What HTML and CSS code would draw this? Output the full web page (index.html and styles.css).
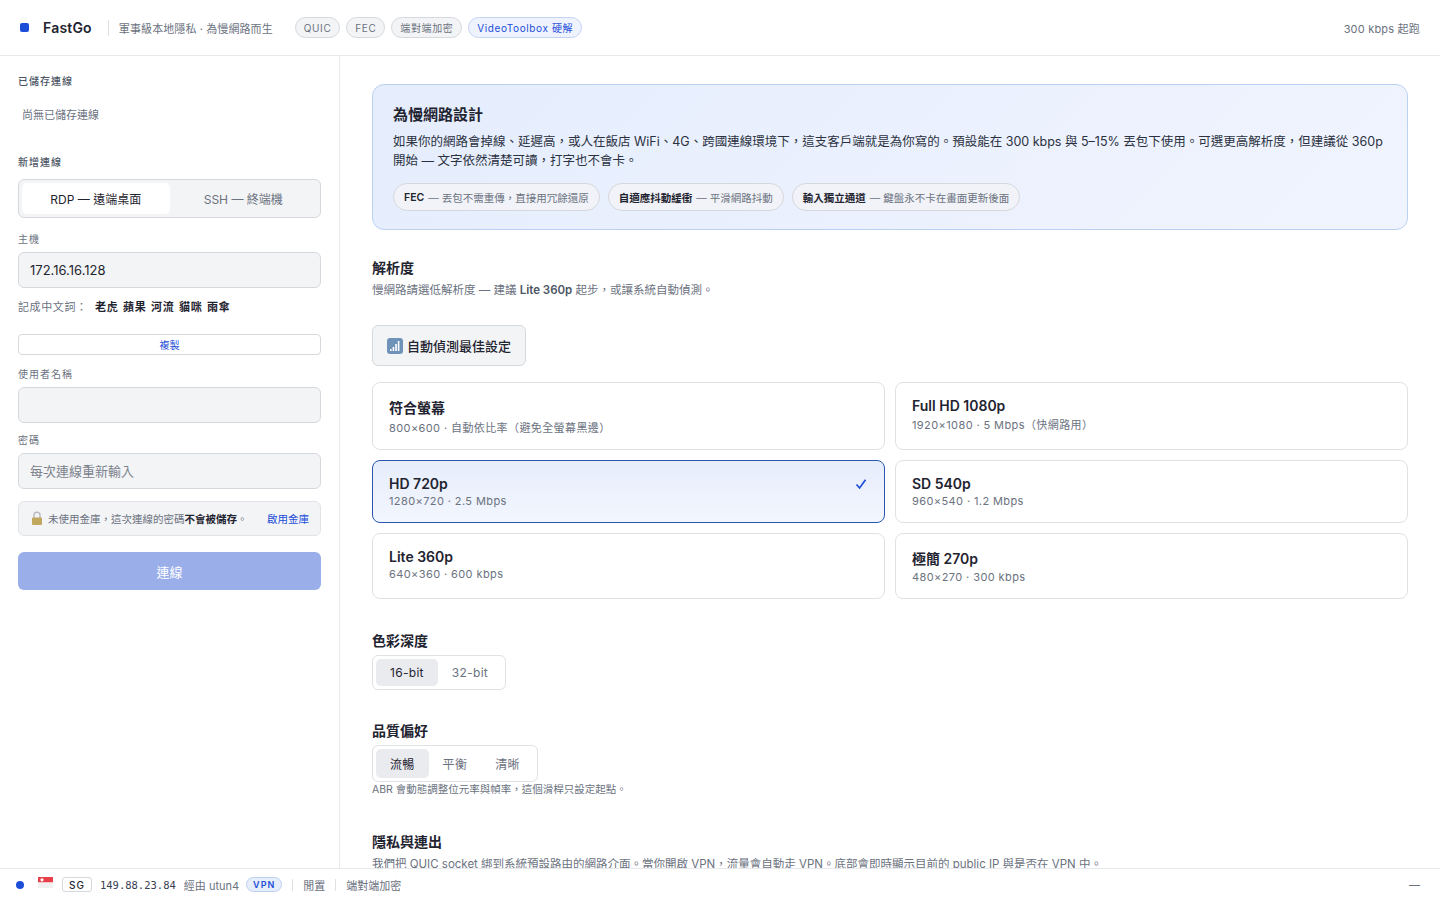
FILE: index.html
```html
<!DOCTYPE html>
<html lang="zh-Hant">
<head>
    <meta charset="UTF-8">
    <meta name="viewport" content="width=device-width, initial-scale=1.0">
    <title>FastGo</title>
    <link rel="stylesheet" href="styles.css">
</head>
<body>
    <div class="app">
        <header class="topbar">
            <span class="brand-dot"></span>
            <span class="brand">FastGo</span>
            <span class="tagline">軍事級本地隱私 · 為慢網路而生</span>
            <div class="tags">
                <span class="tag">QUIC</span>
                <span class="tag">FEC</span>
                <span class="tag">端對端加密</span>
                <span class="tag tag-blue">VideoToolbox 硬解</span>
            </div>
            <span class="topbar-right">300 kbps 起跑</span>
        </header>

        <div class="body">
            <aside class="sidebar">
                <div class="side-title">已儲存連線</div>
                <div class="empty">尚無已儲存連線</div>
                <div class="side-title side-title-new">新增連線</div>

                <div class="proto">
                    <button class="proto-btn active">RDP — 遠端桌面</button>
                    <button class="proto-btn">SSH — 終端機</button>
                </div>

                <label class="field-label label-host">主機</label>
                <input class="input" type="text" value="172.16.16.128">

                <div class="words">
                    <span class="words-label">記成中文詞：</span>
                    <span class="words-list">老虎 蘋果 河流 貓咪 雨傘</span>
                </div>
                <button class="copy-btn">複製</button>

                <label class="field-label label-user">使用者名稱</label>
                <input class="input" type="text">

                <label class="field-label label-pass">密碼</label>
                <input class="input" type="password" placeholder="每次連線重新輸入">

                <div class="vault">
                    <svg class="lock" width="12" height="15" viewBox="0 0 12 15">
                        <path d="M3 7V4.2a3 3 0 0 1 6 0V7" fill="none" stroke="#b9bcc0" stroke-width="1.5"/>
                        <rect x="1" y="6.5" width="10" height="7.5" rx="1" fill="#c2a75e"/>
                    </svg>
                    <span class="vault-text">未使用金庫，這次連線的密碼<strong>不會被儲存</strong>。</span>
                    <a class="vault-link">啟用金庫</a>
                </div>

                <button class="connect">連線</button>
            </aside>

            <main class="main">
                <section class="banner">
                    <h2>為慢網路設計</h2>
                    <p>如果你的網路會掉線、延遲高，或人在飯店 WiFi、4G、跨國連線環境下，這支客戶端就是為你寫的。預設能在 300 kbps 與 5–15% 丟包下使用。可選更高解析度，但建議從 360p 開始 — 文字依然清楚可讀，打字也不會卡。</p>
                    <div class="pills">
                        <span class="pill"><b>FEC</b> — 丟包不需重傳，直接用冗餘還原</span>
                        <span class="pill"><b>自適應抖動緩衝</b> — 平滑網路抖動</span>
                        <span class="pill"><b>輸入獨立通道</b> — 鍵盤永不卡在畫面更新後面</span>
                    </div>
                </section>

                <section class="sec-res">
                    <h3>解析度</h3>
                    <p class="hint">慢網路請選低解析度 — 建議 <b>Lite 360p</b> 起步，或讓系統自動偵測。</p>
                    <button class="detect">
                        <svg width="16" height="16" viewBox="0 0 16 16">
                            <rect width="16" height="16" rx="3" fill="#6f93b8"/>
                            <rect x="3" y="11" width="1.6" height="2" fill="#fff"/>
                            <rect x="5.6" y="9" width="1.6" height="4" fill="#fff"/>
                            <rect x="8.2" y="6" width="1.6" height="7" fill="#fff"/>
                            <rect x="10.8" y="3" width="1.6" height="10" fill="#fff"/>
                        </svg>
                        自動偵測最佳設定
                    </button>
                    <div class="res-grid">
                        <div class="res-card">
                            <div class="res-name">符合螢幕</div>
                            <div class="res-sub">800×600 · 自動依比率（避免全螢幕黑邊）</div>
                        </div>
                        <div class="res-card">
                            <div class="res-name">Full HD 1080p</div>
                            <div class="res-sub">1920×1080 · 5 Mbps（快網路用）</div>
                        </div>
                        <div class="res-card selected">
                            <div class="res-name">HD 720p</div>
                            <div class="res-sub">1280×720 · 2.5 Mbps</div>
                            <svg class="check" width="12" height="12" viewBox="0 0 12 12">
                                <path d="M1.5 6.5 4.6 10 10.5 1.8" fill="none" stroke="#1d4ed8" stroke-width="1.7"/>
                            </svg>
                        </div>
                        <div class="res-card">
                            <div class="res-name">SD 540p</div>
                            <div class="res-sub">960×540 · 1.2 Mbps</div>
                        </div>
                        <div class="res-card">
                            <div class="res-name">Lite 360p</div>
                            <div class="res-sub">640×360 · 600 kbps</div>
                        </div>
                        <div class="res-card">
                            <div class="res-name">極簡 270p</div>
                            <div class="res-sub">480×270 · 300 kbps</div>
                        </div>
                    </div>
                </section>

                <section class="sec-color">
                    <h3>色彩深度</h3>
                    <div class="seg">
                        <button class="seg-btn active">16-bit</button>
                        <button class="seg-btn">32-bit</button>
                    </div>
                </section>

                <section class="sec-quality">
                    <h3>品質偏好</h3>
                    <div class="seg seg-tall">
                        <button class="seg-btn active">流暢</button>
                        <button class="seg-btn">平衡</button>
                        <button class="seg-btn">清晰</button>
                    </div>
                    <p class="note">ABR 會動態調整位元率與幀率，這個滑桿只設定起點。</p>
                </section>

                <section class="sec-privacy">
                    <h3>隱私與連出</h3>
                    <p class="hint">我們把 QUIC socket 綁到系統預設路由的網路介面。當你開啟 VPN，流量會自動走 VPN。底部會即時顯示目前的 public IP 與是否在 VPN 中。</p>
                </section>
            </main>
        </div>

        <footer class="statusbar">
            <span class="status-dot"></span>
            <svg class="flag" width="15" height="11" viewBox="0 0 15 11">
                <rect width="15" height="5.5" fill="#e8404a"/>
                <rect y="5.5" width="15" height="5.5" fill="#f1f1f1"/>
                <circle cx="4" cy="2.8" r="1.6" fill="#fff"/>
            </svg>
            <span class="cc">SG</span>
            <span class="ip">149.88.23.84</span>
            <span class="via">經由 utun4</span>
            <span class="vpn">VPN</span>
            <span class="sep"></span>
            <span class="status-text">閒置</span>
            <span class="sep"></span>
            <span class="status-text">端對端加密</span>
            <span class="status-right">—</span>
        </footer>
    </div>
</body>
</html>
```

FILE: styles.css
```css
* {
    box-sizing: border-box;
}

body {
    margin: 0;
    font-family: Inter, "Noto Sans CJK TC", sans-serif;
    color: #1f2430;
    background: #fff;
}

h2, h3, p {
    margin: 0;
}

button {
    font-family: inherit;
    cursor: pointer;
}

.app {
    height: 100vh;
    display: flex;
    flex-direction: column;
    overflow: hidden;
}

/* top bar */
.topbar {
    height: 56px;
    flex: none;
    display: flex;
    align-items: center;
    padding: 0 20px;
    border-bottom: 1px solid #e8e9ec;
}

.brand-dot {
    width: 9px;
    height: 9px;
    border-radius: 2px;
    background: #1d4ed8;
    margin-right: 14px;
}

.brand {
    font-size: 14px;
    font-weight: 600;
    letter-spacing: 0.2px;
    padding-right: 16px;
    margin-right: 10px;
    border-right: 1px solid #dfe1e5;
    height: 16px;
    line-height: 16px;
}

.tagline {
    font-size: 11px;
    color: #6b7280;
    letter-spacing: 0.1px;
}

.tags {
    display: flex;
    gap: 6px;
    margin-left: 22px;
}

.tag {
    height: 21px;
    display: flex;
    align-items: center;
    padding: 0 8px;
    font-size: 10px;
    letter-spacing: 0.6px;
    color: #6b7280;
    background: #f3f4f6;
    border: 1px solid #d5d8dd;
    border-radius: 11px;
}

.tag-blue {
    color: #1d4ed8;
    background: #eef3fe;
    border-color: #c5d3f3;
}

.topbar-right {
    margin-left: auto;
    font-size: 11px;
    color: #6b7280;
    letter-spacing: 0.2px;
}

.body {
    flex: 1;
    display: flex;
    min-height: 0;
}

/* sidebar */
.sidebar {
    width: 340px;
    flex: none;
    padding: 18px 18px 0;
    border-right: 1px solid #e8e9ec;
}

.side-title {
    font-size: 10px;
    line-height: 15px;
    font-weight: 500;
    letter-spacing: 1px;
    color: #4b5563;
}

.empty {
    margin-top: 18px;
    padding-left: 4px;
    font-size: 11px;
    line-height: 16px;
    color: #6b7280;
}

.side-title-new {
    margin-top: 32px;
}

.proto {
    margin-top: 9px;
    height: 39px;
    display: flex;
    padding: 3px;
    background: #f3f4f6;
    border: 1px solid #d5d8dd;
    border-radius: 6px;
}

.proto-btn {
    flex: 1;
    border: none;
    background: none;
    border-radius: 5px;
    font-size: 12px;
    color: #6b7280;
}

.proto-btn.active {
    background: #fff;
    color: #1f2430;
}

.field-label {
    display: block;
    font-size: 10px;
    line-height: 15px;
    letter-spacing: 1px;
    color: #6b7280;
}

.label-host {
    margin-top: 14px;
}

.label-user {
    margin-top: 12px;
}

.label-pass {
    margin-top: 10px;
}

.input {
    display: block;
    width: 100%;
    height: 36px;
    margin-top: 5px;
    padding: 0 11px;
    font-family: inherit;
    font-size: 13px;
    color: #1f2430;
    background: #f3f4f6;
    border: 1px solid #d5d8dd;
    border-radius: 6px;
    outline: none;
}

.input::placeholder {
    color: #7b818b;
}

.words {
    margin-top: 9px;
    height: 18px;
    display: flex;
    align-items: center;
    font-size: 11px;
}

.words-label {
    color: #6b7280;
    letter-spacing: 0.6px;
    width: 77px;
}

.words-list {
    font-weight: 700;
    letter-spacing: 0.8px;
    word-spacing: 1px;
}

.copy-btn {
    display: block;
    width: 100%;
    height: 21px;
    margin-top: 19px;
    padding: 0;
    font-size: 10px;
    color: #1d4ed8;
    background: #fff;
    border: 1px solid #d5d8dd;
    border-radius: 4px;
}

.vault {
    margin-top: 12px;
    height: 35px;
    display: flex;
    align-items: center;
    padding: 0 11px 0 12px;
    font-size: 10.5px;
    color: #6b7280;
    background: #f3f4f6;
    border: 1px solid #e1e3e7;
    border-radius: 6px;
}

.vault strong {
    color: #1f2430;
}

.lock {
    margin-right: 5px;
    flex: none;
}

.vault-link {
    margin-left: auto;
    color: #1d4ed8;
}

.connect {
    display: block;
    width: 100%;
    height: 38px;
    margin-top: 16px;
    font-size: 13px;
    color: #fff;
    background: #9aaeea;
    border: none;
    border-radius: 6px;
}

/* main column */
.main {
    flex: 1;
    min-width: 0;
    padding: 28px 32px 0;
    overflow: hidden;
}

.banner {
    padding: 19px 20px 18px;
    background: linear-gradient(135deg, #e5edfd, #f0f4fe);
    border: 1px solid #bcd0f2;
    border-radius: 12px;
}

.banner h2 {
    font-size: 15px;
    line-height: 22px;
    font-weight: 600;
}

.banner p {
    margin-top: 6px;
    font-size: 12.5px;
    line-height: 19px;
    color: #2b3140;
}

.pills {
    display: flex;
    gap: 8px;
    margin-top: 13px;
}

.pill {
    height: 28px;
    display: flex;
    align-items: center;
    gap: 4px;
    padding: 0 10px;
    font-size: 10.5px;
    color: #6b7280;
    background: #f1f3f8;
    border: 1px solid #d5d8dd;
    border-radius: 14px;
}

.pill b {
    color: #1f2430;
    font-weight: 600;
}

.main h3 {
    font-size: 14px;
    line-height: 20px;
    font-weight: 600;
}

.hint {
    margin-top: 3px;
    font-size: 11.5px;
    line-height: 18px;
    color: #6b7280;
    white-space: nowrap;
}

.hint b {
    font-weight: 600;
    color: #4b5563;
}

.sec-res {
    margin-top: 28px;
}

.detect {
    display: flex;
    align-items: center;
    gap: 4px;
    height: 41px;
    margin-top: 26px;
    padding: 0 14px;
    font-size: 13px;
    font-weight: 500;
    color: #1f2430;
    background: #f3f4f6;
    border: 1px solid #d5d8dd;
    border-radius: 6px;
}

.res-grid {
    margin-top: 16px;
    display: grid;
    grid-template-columns: 1fr 1fr;
    gap: 10px;
}

.res-card {
    position: relative;
    padding: 14px 16px;
    background: #fff;
    border: 1px solid #dfe1e5;
    border-radius: 8px;
}

.res-card.selected {
    border-color: #2a55b0;
    background: linear-gradient(180deg, #e6edfb, #f3f6fe);
}

.res-name {
    font-size: 14px;
    font-weight: 600;
}

.res-sub {
    margin-top: 2px;
    font-size: 11px;
    letter-spacing: 0.4px;
    color: #6b7280;
}

.check {
    position: absolute;
    top: 17px;
    right: 17px;
}

.sec-color {
    margin-top: 32px;
}

.seg {
    display: inline-flex;
    height: 35px;
    margin-top: 4px;
    padding: 3px;
    background: #fff;
    border: 1px solid #dfe1e5;
    border-radius: 6px;
}

.seg-tall {
    height: 37px;
}

.seg-btn {
    padding: 0 14px;
    border: none;
    background: none;
    border-radius: 5px;
    font-size: 12px;
    letter-spacing: 0.3px;
    color: #6b7280;
}

.seg-btn.active {
    background: #e9ebef;
    color: #1f2430;
}

.sec-quality {
    margin-top: 31px;
}

.note {
    font-size: 10.5px;
    line-height: 16px;
    color: #6b7280;
}

.sec-privacy {
    margin-top: 34px;
}

/* status bar */
.statusbar {
    height: 32px;
    flex: none;
    display: flex;
    align-items: center;
    padding: 0 16px;
    font-size: 11px;
    color: #6b7280;
    border-top: 1px solid #e8e9ec;
}

.status-dot {
    width: 8px;
    height: 8px;
    border-radius: 50%;
    background: #1d4ed8;
    margin-right: 14px;
}

.flag {
    margin-right: 9px;
    margin-top: -4px;
}

.cc {
    height: 15px;
    padding: 0 6px;
    display: flex;
    align-items: center;
    font-size: 10px;
    font-weight: 500;
    letter-spacing: 1px;
    color: #1f2430;
    border: 1px solid #d5d8dd;
    border-radius: 3px;
    margin-right: 8px;
}

.ip {
    font-family: "DejaVu Sans Mono", monospace;
    font-size: 10.5px;
    color: #374151;
    margin-right: 8px;
}

.via {
    margin-right: 7px;
}

.vpn {
    height: 15px;
    padding: 0 6px;
    display: flex;
    align-items: center;
    font-size: 9px;
    font-weight: 600;
    letter-spacing: 1px;
    color: #1d4ed8;
    background: #e6edfb;
    border: 1px solid #bcd0f2;
    border-radius: 8px;
}

.sep {
    width: 1px;
    height: 12px;
    background: #dfe1e5;
    margin: 0 10px;
}

.status-right {
    margin-left: auto;
    margin-right: 4px;
}
```
